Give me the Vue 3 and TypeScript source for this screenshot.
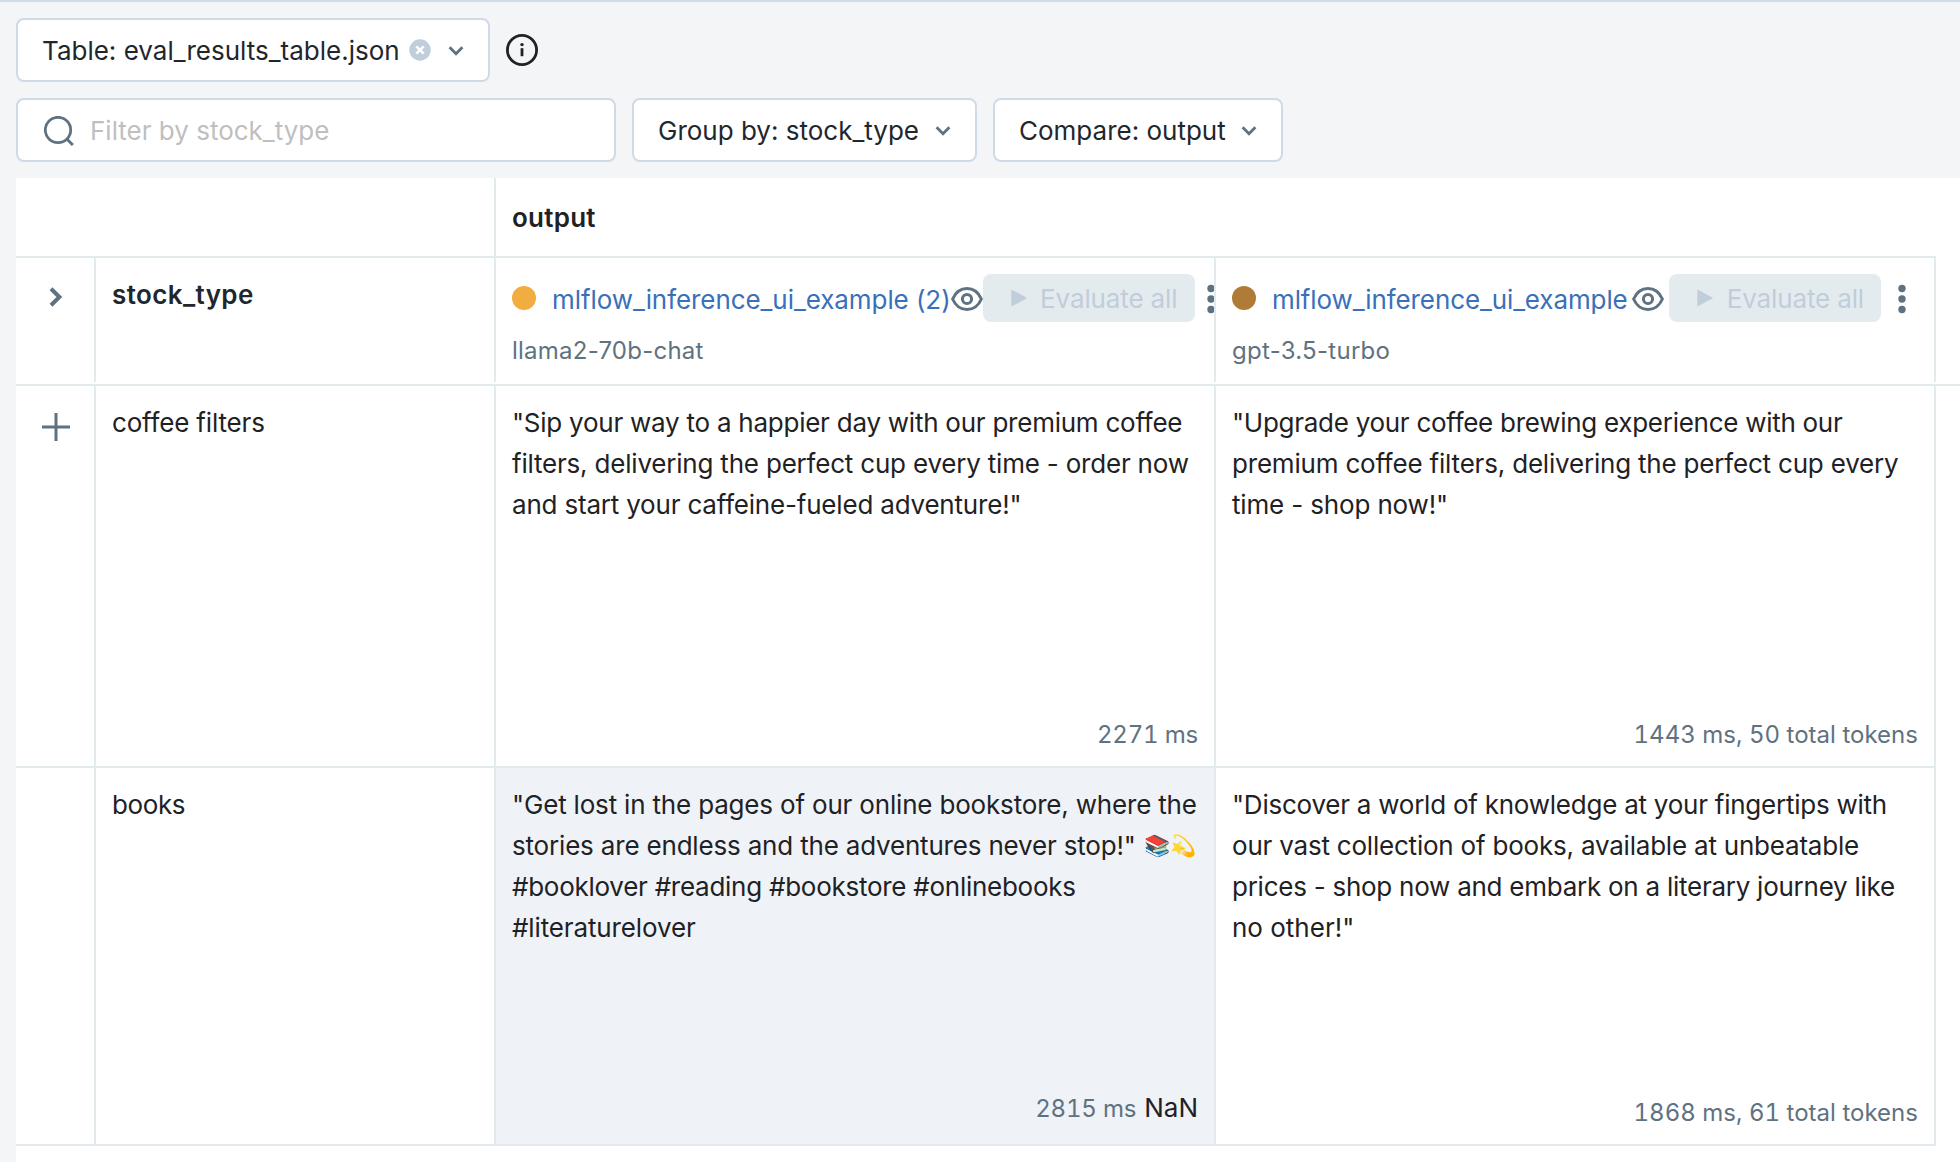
<script setup lang="ts">
interface Line {
  text: string
  spacing: number
  emoji?: string
}
interface Output {
  lines: Line[]
  meta: string
  metaSpacing: number
  extra?: string
  selected?: boolean
}
interface Row {
  label: string
  spacing: number
  addable: boolean
  outputs: Output[]
}
interface Run {
  name: string
  spacing: number
  model: string
  modelSpacing: number
  color: string
}

const runs: Run[] = [
  { name: 'mlflow_inference_ui_example (2)', spacing: -0.07, model: 'llama2-70b-chat', modelSpacing: 0.24, color: '#f2ad40' },
  { name: 'mlflow_inference_ui_example', spacing: -0.11, model: 'gpt-3.5-turbo', modelSpacing: 0.28, color: '#b07b36' },
]

const rows: Row[] = [
  {
    label: 'coffee filters',
    spacing: -0.17,
    addable: true,
    outputs: [
      {
        lines: [
          { text: '"Sip your way to a happier day with our premium coffee', spacing: -0.245 },
          { text: 'filters, delivering the perfect cup every time - order now', spacing: -0.2 },
          { text: 'and start your caffeine-fueled adventure!"', spacing: -0.195 },
        ],
        meta: '2271 ms',
        metaSpacing: -0.2,
      },
      {
        lines: [
          { text: '"Upgrade your coffee brewing experience with our', spacing: -0.275 },
          { text: 'premium coffee filters, delivering the perfect cup every', spacing: -0.195 },
          { text: 'time - shop now!"', spacing: -0.155 },
        ],
        meta: '1443 ms, 50 total tokens',
        metaSpacing: 0.02,
      },
    ],
  },
  {
    label: 'books',
    spacing: -0.4,
    addable: false,
    outputs: [
      {
        lines: [
          { text: '"Get lost in the pages of our online bookstore, where the', spacing: -0.18 },
          { text: 'stories are endless and the adventures never stop!"', spacing: -0.183, emoji: '📚💫' },
          { text: '#booklover #reading #bookstore #onlinebooks', spacing: -0.265 },
          { text: '#literaturelover', spacing: -0.13 },
        ],
        meta: '2815 ms',
        metaSpacing: -0.2,
        extra: 'NaN',
        selected: true,
      },
      {
        lines: [
          { text: '"Discover a world of knowledge at your fingertips with', spacing: -0.24 },
          { text: 'our vast collection of books, available at unbeatable', spacing: -0.21 },
          { text: 'prices - shop now and embark on a literary journey like', spacing: -0.255 },
          { text: 'no other!"', spacing: 0 },
        ],
        meta: '1868 ms, 61 total tokens',
        metaSpacing: 0.02,
      },
    ],
  },
]

const px = (v: number) => ({ letterSpacing: v + 'px' })
</script>

<template>
  <div class="page">
    <div class="bar bar-top">
      <button class="select select-table">
        <span class="select-text">Table: eval_results_table.json</span>
        <svg class="clear" viewBox="0 0 24 24"><circle cx="12" cy="12" r="12" /><path d="M8.3 8.3l7.4 7.4M15.7 8.3l-7.4 7.4" /></svg>
        <svg class="chevron" viewBox="0 0 16 12"><path d="M1.6 2.2L8 8.8l6.4-6.6" /></svg>
      </button>
      <svg class="info" viewBox="0 0 32 32">
        <circle cx="16" cy="16" r="14.6" fill="none" stroke="#1f2326" stroke-width="2.8" />
        <path d="M16 14.2v8" stroke="#1f2326" stroke-width="2.8" /><circle cx="16" cy="10.6" r="1.7" fill="#1f2326" />
      </svg>
    </div>
    <div class="bar">
      <div class="search">
        <svg class="magnifier" viewBox="0 0 30 30"><circle cx="14" cy="14" r="12.7" /><path d="M22.8 23l6 6" /></svg>
        <span class="placeholder">Filter by stock_type</span>
      </div>
      <button class="select select-group">
        <span class="select-text">Group by: stock_type</span>
        <svg class="chevron" viewBox="0 0 16 12"><path d="M1.6 2.2L8 8.8l6.4-6.6" /></svg>
      </button>
      <button class="select select-compare">
        <span class="select-text">Compare: output</span>
        <svg class="chevron" viewBox="0 0 16 12"><path d="M1.6 2.2L8 8.8l6.4-6.6" /></svg>
      </button>
    </div>

    <div class="table">
      <div class="row row-group">
        <div class="cell cell-corner"></div>
        <div class="cell-title">output</div>
      </div>

      <div class="row-head-wrap">
        <div class="row row-head">
          <div class="cell cell-action">
            <svg class="expand" viewBox="0 0 14 20"><path d="M2 1.8L10.4 10 2 18.2" /></svg>
          </div>
          <div class="cell cell-label cell-bold">stock_type</div>
          <div v-for="run in runs" :key="run.name" class="cell cell-run">
            <div class="run-line">
              <div class="run-name">
                <span class="run-dot" :style="{ background: run.color }"></span>
                <a class="run-link" :style="px(run.spacing)">{{ run.name }}</a>
              </div>
              <svg class="eye" viewBox="0 0 32 32">
                <path d="M1.6 16C4.6 9.2 9.8 5.5 16 5.5S27.4 9.2 30.4 16C27.4 22.8 22.2 26.5 16 26.5S4.6 22.8 1.6 16Z" />
                <circle cx="16" cy="16" r="4.6" />
              </svg>
              <button class="evaluate" disabled>
                <svg class="play" viewBox="0 0 16 18"><path d="M1 1.5L15 9 1 16.5Z" /></svg>
                <span class="evaluate-text">Evaluate all</span>
              </button>
              <svg class="kebab" viewBox="0 0 32 32">
                <circle cx="16" cy="5.5" r="3.7" /><circle cx="16" cy="16" r="3.7" /><circle cx="16" cy="26.5" r="3.7" />
              </svg>
            </div>
            <div class="run-model" :style="px(run.modelSpacing)">{{ run.model }}</div>
          </div>
        </div>
      </div>

      <div v-for="(row, i) in rows" :key="row.label" class="row row-body" :class="{ 'row-last': i === rows.length - 1 }">
        <div class="cell cell-action">
          <svg v-if="row.addable" class="plus" viewBox="0 0 28 28"><path d="M14 0v28M0 14h28" /></svg>
        </div>
        <div class="cell cell-label" :style="px(row.spacing)">{{ row.label }}</div>
        <div v-for="out in row.outputs" :key="out.meta" class="cell cell-output" :class="{ selected: out.selected }">
          <div class="text">
            <div v-for="line in out.lines" :key="line.text" class="line">
              <span :style="px(line.spacing)">{{ line.text }}</span>
              <span v-if="line.emoji" class="emoji">{{ line.emoji }}</span>
            </div>
          </div>
          <div class="meta" :class="{ 'meta-extra': out.extra }">
            <span :style="px(out.metaSpacing)">{{ out.meta }}</span>
            <span v-if="out.extra" class="extra">{{ out.extra }}</span>
          </div>
        </div>
      </div>
    </div>
  </div>
</template>

<style>
body {
  margin: 0;
}
</style>

<style scoped>
.page {
  box-sizing: border-box;
  display: flex;
  flex-direction: column;
  width: 1960px;
  height: 1162px;
  padding-left: 16px;
  overflow: hidden;
  border-top: 2px solid #d1dde6;
  background: #f3f5f7;
  color: #1f2224;
  font: 26px/41px Inter, "Liberation Sans", sans-serif;
  white-space: nowrap;
}
.page * {
  box-sizing: border-box;
}
svg {
  display: block;
  flex: none;
}
button {
  margin: 0;
  font: inherit;
  color: inherit;
}
.bar {
  display: flex;
  flex: none;
  align-items: center;
  gap: 16px;
  height: 64px;
  margin-bottom: 16px;
}
.bar-top {
  margin-top: 16px;
}
.select,
.search {
  display: flex;
  align-items: center;
  height: 64px;
  padding: 0 24px;
  border: 2px solid #cfdae7;
  border-radius: 8px;
  background: #fff;
}
.select {
  justify-content: space-between;
  color: #1f272d;
}
.select-text,
.placeholder {
  padding-top: 1px;
}
.select-table {
  width: 474px;
  justify-content: flex-start;
}
.select-group {
  width: 345px;
}
.select-compare {
  width: 290px;
}
.search {
  width: 600px;
  padding-left: 26px;
}
.magnifier {
  width: 30px;
  height: 30px;
  margin-top: 1px;
  fill: none;
  stroke: #5f7281;
  stroke-width: 2.8;
}
.placeholder {
  margin-left: 16px;
  color: #bfbfbf;
}
.clear {
  width: 24px;
  height: 24px;
  margin-left: 8px;
  fill: #c0cddb;
  stroke: #fff;
  stroke-width: 2.6;
}
.chevron {
  width: 16px;
  height: 12px;
  margin-top: 1px;
  fill: none;
  stroke: #5f7281;
  stroke-width: 2.8;
}
.select-table .chevron {
  margin-left: 16px;
}
.info {
  width: 32px;
  height: 32px;
}
.table {
  flex: 1;
  background: #fff;
}
.row {
  display: flex;
  width: 1920px;
}
.cell {
  flex: none;
  border-right: 2px solid #e3eaee;
}
.row-group {
  height: 80px;
  border-bottom: 2px solid #e3eaee;
}
.cell-corner {
  width: 480px;
}
.cell-title {
  padding: 19px 16px 0;
  font-weight: 600;
  letter-spacing: 0.25px;
}
.row-head-wrap {
  height: 128px;
  padding-bottom: 2px;
  border-bottom: 2px solid #e3eaee;
}
.row-head {
  height: 124px;
}
.cell-action {
  display: flex;
  justify-content: center;
  width: 80px;
}
.expand {
  width: 14px;
  height: 20px;
  margin-top: 29px;
  margin-left: 2px;
  fill: none;
  stroke: #5f7281;
  stroke-width: 4;
}
.plus {
  width: 28px;
  height: 28px;
  margin-top: 27px;
  margin-left: 2px;
  stroke: #5f7281;
  stroke-width: 3;
}
.cell-label {
  width: 400px;
  padding: 16px;
}
.cell-bold {
  color: #1f272d;
  font-weight: 600;
  letter-spacing: 0.39px;
}
.cell-run {
  width: 720px;
  padding: 16px;
  overflow: hidden;
}
.run-line {
  display: flex;
  align-items: center;
  justify-content: space-between;
  height: 48px;
}
.run-line > * {
  flex: none;
}
.run-name {
  display: flex;
  align-items: center;
}
.run-dot {
  width: 24px;
  height: 24px;
  margin-right: 16px;
  border-radius: 50%;
}
.run-link {
  padding-top: 2px;
  color: #3a70b9;
}
.eye {
  width: 32px;
  height: 32px;
  margin-top: 2px;
  fill: none;
  stroke: #5f7281;
  stroke-width: 3;
}
.evaluate {
  display: flex;
  align-items: center;
  width: 212px;
  height: 48px;
  padding: 0 0 0 28px;
  border: 0;
  border-radius: 8px;
  background: #e4ebee;
  color: #c0cddb;
  letter-spacing: -0.13px;
}
.evaluate-text {
  padding-top: 1px;
}
.play {
  width: 16px;
  height: 18px;
  margin-right: 13.5px;
  fill: #c0cddb;
  stroke: #c0cddb;
  stroke-width: 1.4;
  stroke-linejoin: round;
}
.kebab {
  width: 32px;
  height: 32px;
  margin-top: 2px;
  fill: #5f7281;
}
.run-model {
  margin-top: 8px;
  color: #5f7281;
  font-size: 24px;
}
.row-body {
  height: 382px;
  border-bottom: 2px solid #e3eaee;
}
.row-last {
  height: 378px;
}
.cell-output {
  display: flex;
  flex-direction: column;
  justify-content: space-between;
  width: 720px;
  padding: 16px 16px 11px;
}
.selected {
  background: #eff2f7;
}
.line {
  display: flex;
}
.emoji {
  margin-left: 8px;
  font-size: 21px;
}
.meta {
  display: flex;
  align-items: baseline;
  justify-content: flex-end;
  color: #5f7281;
  font-size: 24px;
  font-variant-numeric: tabular-nums;
}
.meta-extra {
  margin-bottom: 4px;
}
.extra {
  margin-left: 8px;
  color: #1f2224;
  font-size: 26px;
}
</style>
